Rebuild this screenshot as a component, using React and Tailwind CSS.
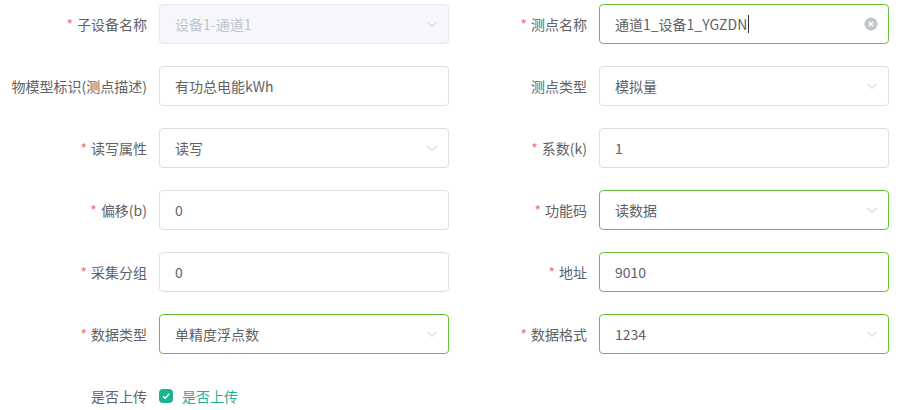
import React from 'react';

const Chevron = () => (
  <svg width="14" height="14" viewBox="0 0 14 14" className="shrink-0">
    <path d="M2.5 5 L7 9.5 L11.5 5" fill="none" stroke="#c0c4cc" strokeWidth="1" />
  </svg>
);

const ClearIcon = () => (
  <svg width="14" height="14" viewBox="0 0 14 14" className="shrink-0">
    <circle cx="7" cy="7" r="6.5" fill="#c0c4cc" />
    <path d="M4.8 4.8 L9.2 9.2 M9.2 4.8 L4.8 9.2" stroke="#fff" strokeWidth="1.3" />
  </svg>
);

function Label({ text, required, width }) {
  return (
    <div className={`${width} shrink-0 pr-3 flex items-center justify-end h-10 text-sm text-[#606266]`}>
      {required && <span className="text-[#f56c6c] mr-1">*</span>}
      {text}
    </div>
  );
}

function Field({ value, select, disabled, ok, clear, caret }) {
  const border = ok ? 'border-[#67c23a]' : disabled ? 'border-[#e4e7ed]' : 'border-[#dcdfe6]';
  return (
    <div
      className={`w-[290px] h-10 shrink-0 border rounded ${border} ${disabled ? 'bg-[#f5f7fa]' : 'bg-white'} flex items-center pl-[15px] ${clear ? 'pr-[10px]' : 'pr-[9px]'}`}
    >
      <span className={`flex-1 text-sm ${disabled ? 'text-[#c0c4cc]' : 'text-[#606266]'} flex items-center`}>
        {value}
        {caret && <span className="inline-block w-px h-[18px] bg-[#303133] ml-px" />}
      </span>
      {select && <Chevron />}
      {clear && <ClearIcon />}
    </div>
  );
}

const rows = [
  [
    { label: '子设备名称', required: true, value: '设备1-通道1', select: true, disabled: true },
    { label: '测点名称', required: true, value: '通道1_设备1_YGZDN', ok: true, clear: true, caret: true },
  ],
  [
    { label: '物模型标识(测点描述)', value: '有功总电能kWh' },
    { label: '测点类型', value: '模拟量', select: true },
  ],
  [
    { label: '读写属性', required: true, value: '读写', select: true },
    { label: '系数(k)', required: true, value: '1' },
  ],
  [
    { label: '偏移(b)', required: true, value: '0' },
    { label: '功能码', required: true, value: '读数据', select: true, ok: true },
  ],
  [
    { label: '采集分组', required: true, value: '0' },
    { label: '地址', required: true, value: '9010', ok: true },
  ],
  [
    { label: '数据类型', required: true, value: '单精度浮点数', select: true, ok: true },
    { label: '数据格式', required: true, value: '1234', select: true, ok: true },
  ],
];

export default function App() {
  return (
    <div
      className="w-[914px] h-[410px] overflow-hidden bg-white pt-1"
      style={{ fontFamily: '"Noto Sans CJK SC", "Noto Sans", sans-serif' }}
    >
      <div className="flex flex-col gap-[22px]">
        {rows.map(([l, r], i) => (
          <div key={i} className="flex">
            <Label text={l.label} required={l.required} width="w-[159px]" />
            <Field {...l} />
            <Label text={r.label} required={r.required} width="w-[150px]" />
            <Field {...r} />
          </div>
        ))}
        <div className="flex">
          <Label text="是否上传" width="w-[159px]" />
          <div className="flex items-center h-10 gap-[9px]">
            <span className="w-[14px] h-[14px] rounded-sm bg-[#1ab394] flex items-center justify-center">
              <svg width="10" height="10" viewBox="0 0 10 10">
                <path d="M2 5.2 L4.2 7.3 L8.2 2.8" fill="none" stroke="#fff" strokeWidth="1.3" />
              </svg>
            </span>
            <span className="text-sm text-[#1ab394]">是否上传</span>
          </div>
        </div>
      </div>
    </div>
  );
}
